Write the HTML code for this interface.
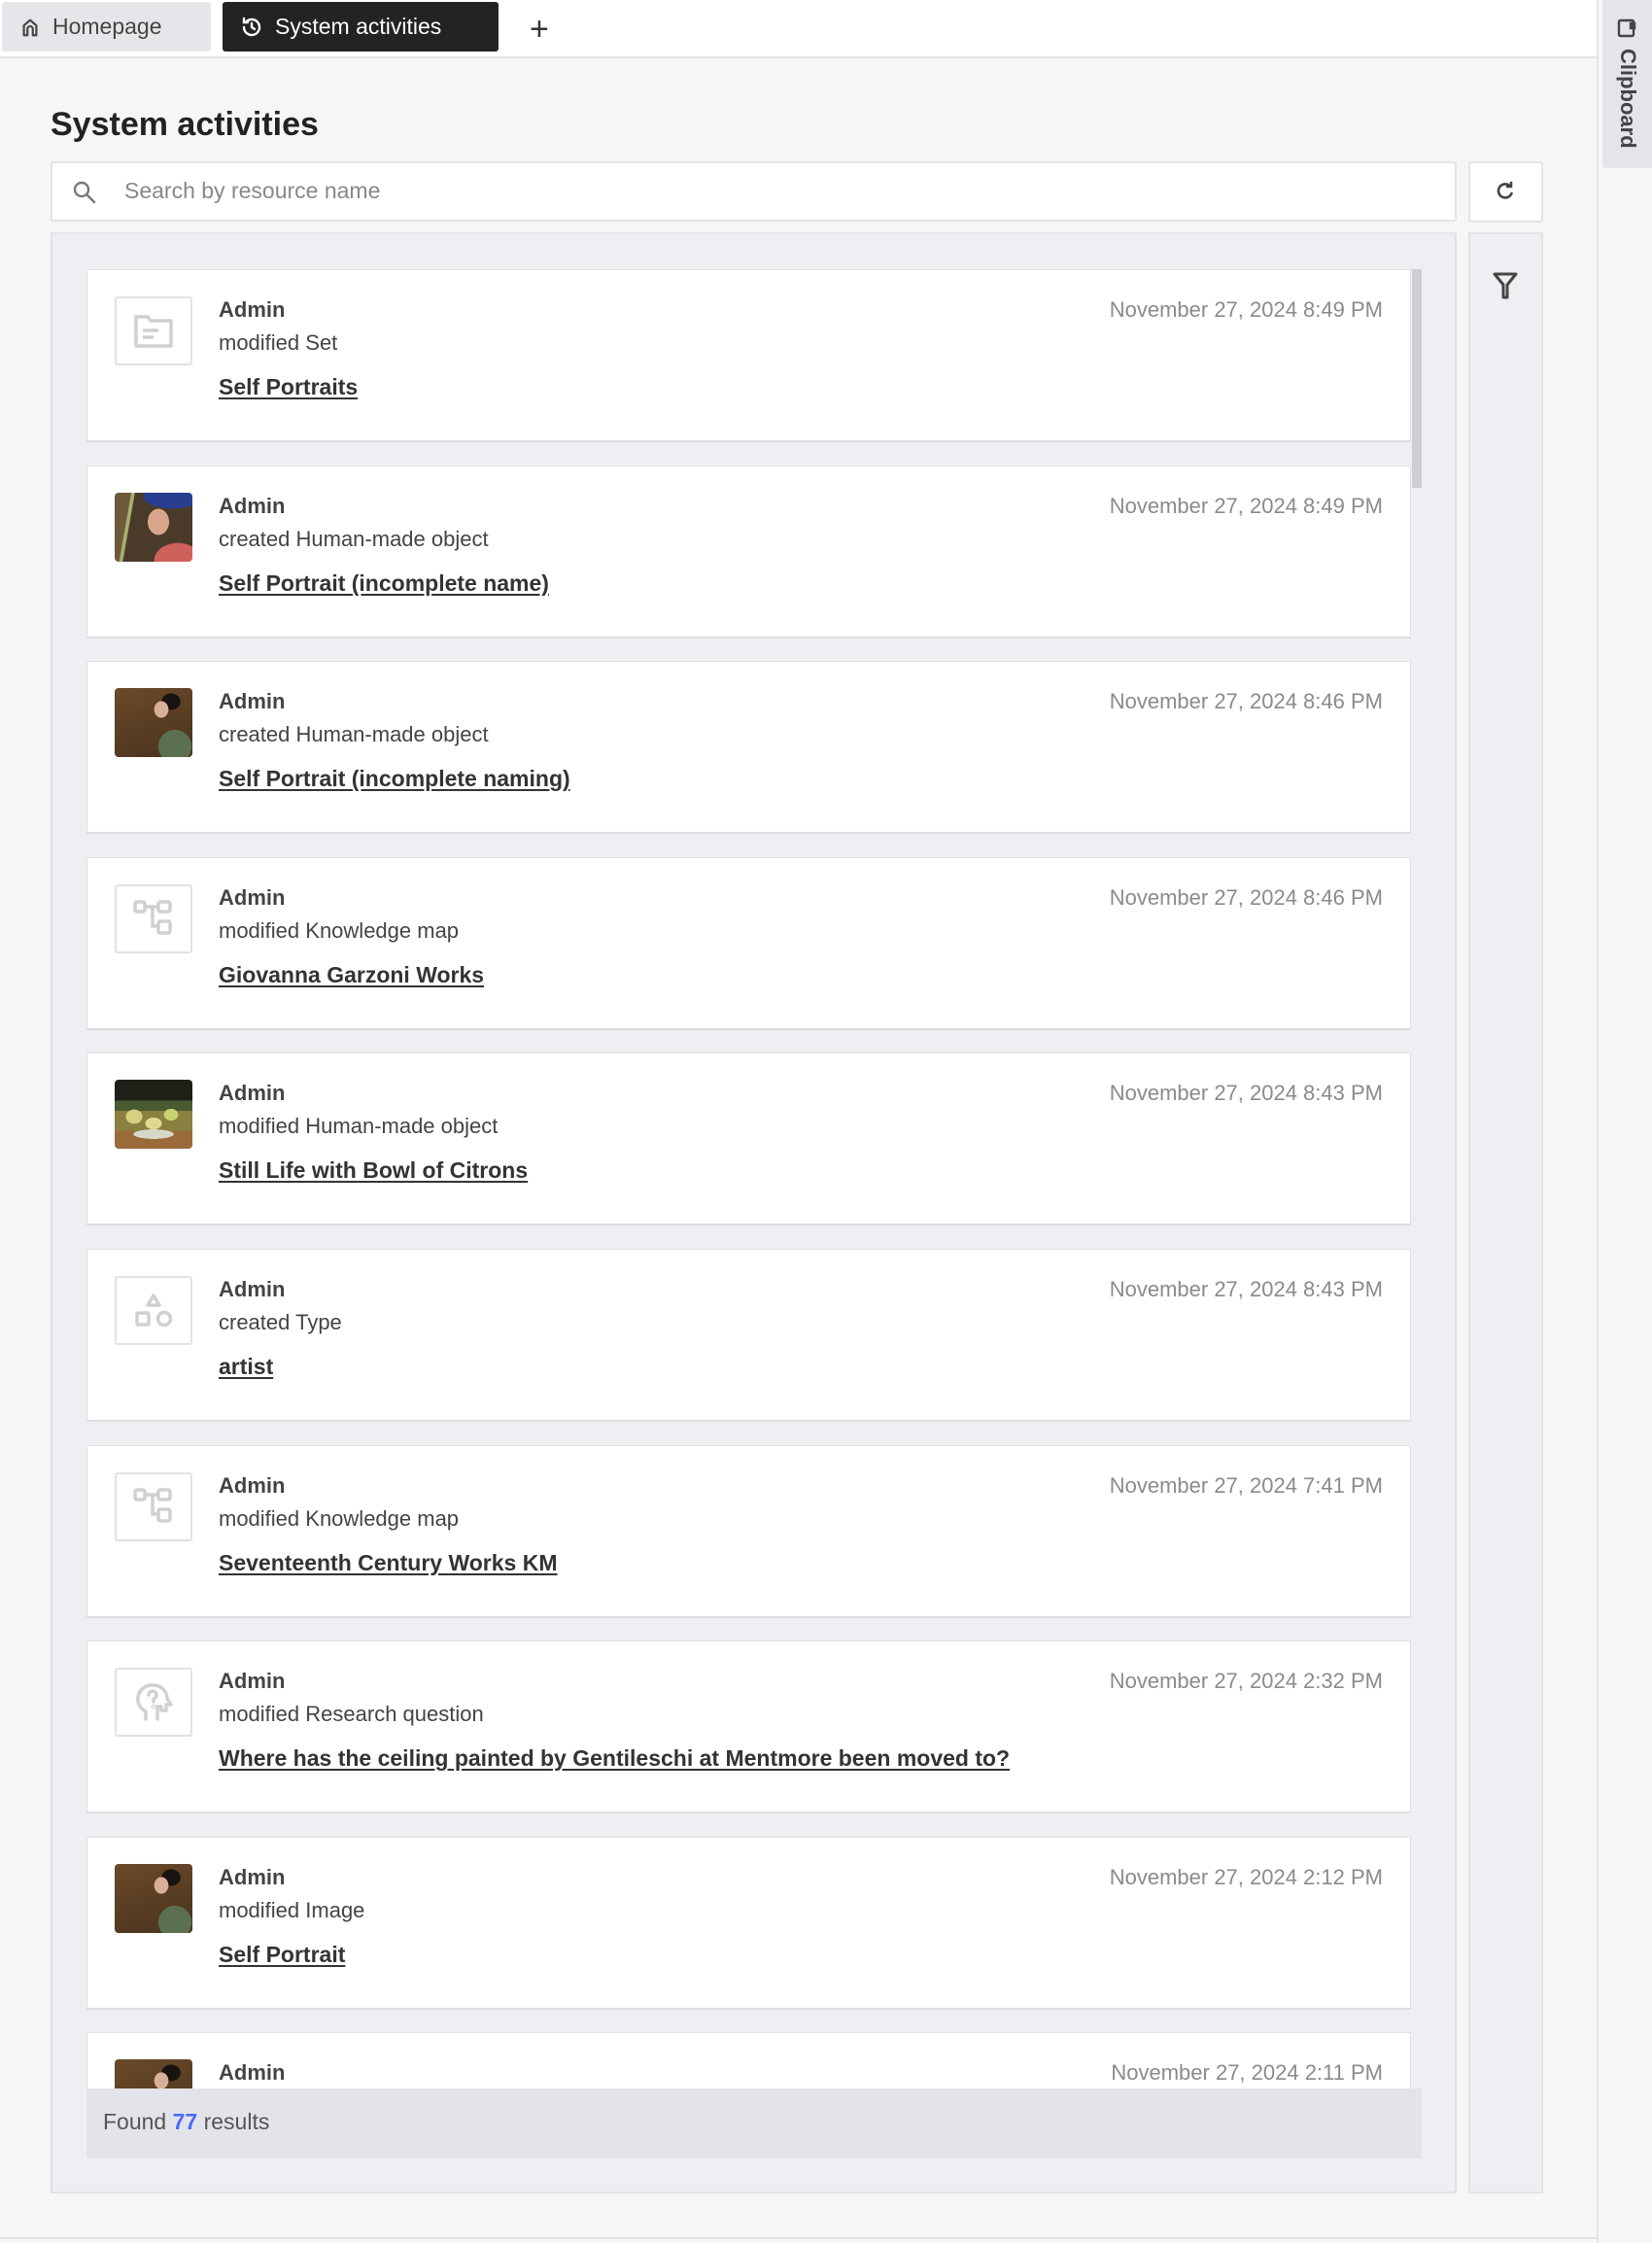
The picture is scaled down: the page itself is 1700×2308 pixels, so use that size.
<!DOCTYPE html>
<html><head><meta charset="utf-8">
<style>
*{box-sizing:border-box;margin:0;padding:0}
body{width:1700px;height:2308px;background:#f6f6f8;font-family:"Liberation Sans",sans-serif;position:relative;overflow:hidden;color:#333}
.abs{position:absolute}
.tabbar{left:0;top:0;width:1643px;height:60px;background:#fff;border-bottom:2px solid #e4e4e8}
.tab{position:absolute;top:2px;height:51px;border-radius:3px;font-size:23px;display:flex;align-items:center}
.card{position:absolute;left:89px;width:1363px;height:178px;background:#fff;border:1px solid #e0e0e4;border-bottom:2px solid #dcdce2}
.thumb{position:absolute;left:28px;top:27px;width:80px;height:71px;border:2px solid #e2e2e6;border-radius:3px;display:flex;align-items:center;justify-content:center;overflow:hidden}
.pic{border:none;border-radius:4px}
.who{position:absolute;left:135px;top:28px;font-size:22px;font-weight:bold;color:#444}
.act{position:absolute;left:135px;top:62px;font-size:22px;color:#444}
.lnk{position:absolute;left:135px;top:107px;font-size:23px;font-weight:bold;color:#333;text-decoration:underline;text-underline-offset:3px}
.date{position:absolute;right:28px;top:28px;font-size:22px;color:#8a8a90}
</style></head><body>
<div class="abs tabbar"></div>
<div class="tab" style="left:2px;width:215px;background:#e6e6ea;color:#444">
<svg style="margin-left:18px" width="22" height="22" viewBox="0 0 24 24" fill="none" stroke="#444" stroke-width="2.4" stroke-linejoin="round"><path d="M5 21V10l7-6 7 6v11h-4v-7a3 3 0 0 0-6 0v7z"/></svg>
<span style="margin-left:12px">Homepage</span></div>
<div class="tab" style="left:229px;width:284px;background:#232325;color:#fff">
<svg style="margin-left:18px" width="24" height="24" viewBox="0 0 24 24" fill="none" stroke="#fff" stroke-width="2.4" stroke-linecap="round"><path d="M4 12a8 8 0 1 0 2.5-5.8"/><path d="M4 3v4h4"/><path d="M12 8v4l3 2"/></svg>
<span style="margin-left:12px">System activities</span></div>
<div class="abs" style="left:545px;top:15px;font-size:34px;color:#333;line-height:30px">+</div>

<div class="abs" style="left:1643px;top:0;width:2px;height:2308px;background:#e6e6ea"></div>
<div class="abs" style="left:1649px;top:0;width:51px;height:173px;background:#e4e4ea;border-radius:0 0 0 4px"></div>
<svg class="abs" style="left:1663px;top:18px" width="22" height="22" viewBox="0 0 22 22" fill="none" stroke="#444" stroke-width="2.4"><rect x="3" y="3" width="15" height="16" rx="1.5"/><rect x="15" y="6" width="4" height="5" fill="#444"/></svg>
<div class="abs" style="left:1662px;top:50px;writing-mode:vertical-rl;font-size:22px;font-weight:bold;color:#444">Clipboard</div>

<div class="abs" style="left:52px;top:111px;font-size:34px;font-weight:bold;color:#222;line-height:34px">System activities</div>

<div class="abs" style="left:52px;top:166px;width:1447px;height:62px;background:#fff;border:2px solid #e4e4e8;border-radius:3px"></div>
<svg class="abs" style="left:74px;top:185px" width="26" height="26" viewBox="0 0 26 26" fill="none" stroke="#777" stroke-width="2.4" stroke-linecap="round"><circle cx="10" cy="10" r="7"/><path d="M15 15l8 8"/></svg>
<div class="abs" style="left:128px;top:183px;font-size:23px;color:#888">Search by resource name</div>
<div class="abs" style="left:1511px;top:166px;width:77px;height:63px;background:#fff;border:2px solid #e4e4e8;border-radius:3px"></div>
<svg class="abs" style="left:1537px;top:185px" width="24" height="24" viewBox="0 0 24 24" fill="none" stroke="#444" stroke-width="2.6" stroke-linecap="round"><path d="M18.5 14a7 7 0 1 1-1.5-7.5"/><path d="M18 3v4h-4"/></svg>

<div class="abs" style="left:52px;top:239px;width:1447px;height:2018px;background:#efeff3;border:2px solid #e2e2e6;border-top:2px solid #e6e6ea"></div>
<div class="abs" style="left:1511px;top:239px;width:77px;height:2018px;background:#efeff3;border:2px solid #e2e2e6"></div>
<svg class="abs" style="left:1536px;top:280px" width="26" height="28" viewBox="0 0 26 28" fill="#444"><path d="M2 2h22l-9 11v13h-4V13z" fill="none" stroke="#444" stroke-width="3" stroke-linejoin="round"/></svg>

<div class="abs" style="left:52px;top:241px;width:1447px;height:1908px;overflow:hidden">
<div style="position:relative;left:-52px;top:-241px;width:1500px;height:2400px">

<div class="card" style="top:277px"><div class="thumb"><svg width="40" height="34" viewBox="0 0 40 34" fill="none" stroke="#d0d0d4" stroke-width="3.5" stroke-linejoin="round"><path d="M2 2h12l3 4h21v26H2z"/><path d="M9 16h16M9 23h11"/></svg></div>
<div class="who">Admin</div><div class="act">modified Set</div><div class="lnk">Self Portraits</div><div class="date">November 27, 2024 8:49 PM</div></div>

<div class="card" style="top:478.6px"><div class="thumb pic" style="background:radial-gradient(ellipse 18px 22px at 45px 30px,#d9a58a 60%,transparent 62%),radial-gradient(ellipse 50px 20px at 60px 4px,#2a3e90 60%,transparent 62%),radial-gradient(ellipse 40px 30px at 65px 70px,#d0605a 60%,transparent 62%),linear-gradient(100deg,#6e5a3a 0 18%,#a8b070 19% 22%,#4a3a2a 23% 100%)"></div>
<div class="who">Admin</div><div class="act">created Human-made object</div><div class="lnk">Self Portrait (incomplete name)</div><div class="date">November 27, 2024 8:49 PM</div></div>

<div class="card" style="top:680.2px"><div class="thumb pic" style="background:radial-gradient(ellipse 12px 14px at 48px 22px,#d8b098 60%,transparent 62%),radial-gradient(ellipse 16px 14px at 58px 14px,#1a1410 60%,transparent 62%),radial-gradient(ellipse 28px 28px at 62px 60px,#5a7050 60%,transparent 62%),linear-gradient(160deg,#6a4a2a,#4a321c)"></div>
<div class="who">Admin</div><div class="act">created Human-made object</div><div class="lnk">Self Portrait (incomplete naming)</div><div class="date">November 27, 2024 8:46 PM</div></div>

<div class="card" style="top:881.8px"><div class="thumb"><svg width="42" height="38" viewBox="0 0 42 38" fill="none" stroke="#d0d0d4" stroke-width="3.5"><rect x="2" y="2" width="10" height="10" rx="2"/><rect x="26" y="2" width="12" height="10" rx="2"/><rect x="26" y="22" width="12" height="12" rx="2"/><path d="M12 7h14M20 7v20h6"/></svg></div>
<div class="who">Admin</div><div class="act">modified Knowledge map</div><div class="lnk">Giovanna Garzoni Works</div><div class="date">November 27, 2024 8:46 PM</div></div>

<div class="card" style="top:1083.4px"><div class="thumb pic" style="background:radial-gradient(ellipse 14px 10px at 40px 45px,#e0d890 60%,transparent 62%),radial-gradient(ellipse 14px 12px at 20px 38px,#d8d080 60%,transparent 62%),radial-gradient(ellipse 12px 10px at 58px 36px,#c8d070 60%,transparent 62%),radial-gradient(ellipse 34px 8px at 40px 56px,#d8d8c8 60%,transparent 62%),linear-gradient(180deg,#1e2018 0 30%,#4a5a30 30% 45%,#8a8040 45% 75%,#9a6a3a 75%)"></div>
<div class="who">Admin</div><div class="act">modified Human-made object</div><div class="lnk">Still Life with Bowl of Citrons</div><div class="date">November 27, 2024 8:43 PM</div></div>

<div class="card" style="top:1285px"><div class="thumb"><svg width="40" height="38" viewBox="0 0 40 38" fill="none" stroke="#d0d0d4" stroke-width="3.5" stroke-linejoin="round"><path d="M20 3l6 10H14z"/><rect x="3" y="21" width="12" height="12" rx="1"/><circle cx="31" cy="27" r="6.5"/></svg></div>
<div class="who">Admin</div><div class="act">created Type</div><div class="lnk">artist</div><div class="date">November 27, 2024 8:43 PM</div></div>

<div class="card" style="top:1486.6px"><div class="thumb"><svg width="42" height="38" viewBox="0 0 42 38" fill="none" stroke="#d0d0d4" stroke-width="3.5"><rect x="2" y="2" width="10" height="10" rx="2"/><rect x="26" y="2" width="12" height="10" rx="2"/><rect x="26" y="22" width="12" height="12" rx="2"/><path d="M12 7h14M20 7v20h6"/></svg></div>
<div class="who">Admin</div><div class="act">modified Knowledge map</div><div class="lnk">Seventeenth Century Works KM</div><div class="date">November 27, 2024 7:41 PM</div></div>

<div class="card" style="top:1688.2px"><div class="thumb"><svg width="40" height="42" viewBox="0 0 40 42" fill="none" stroke="#d0d0d4" stroke-width="3.5" stroke-linecap="round" stroke-linejoin="round"><path d="M12 38v-8C6 27 3 21 4 15 6 6 14 2 21 3c8 1 13 7 13 14l4 6h-5v6h-5v-4h-4v13"/><path d="M15 13a4 4 0 1 1 5 4v3"/><circle cx="20" cy="25" r="0.5"/></svg></div>
<div class="who">Admin</div><div class="act">modified Research question</div><div class="lnk">Where has the ceiling painted by Gentileschi at Mentmore been moved to?</div><div class="date">November 27, 2024 2:32 PM</div></div>

<div class="card" style="top:1889.8px"><div class="thumb pic" style="background:radial-gradient(ellipse 12px 14px at 48px 22px,#d8b098 60%,transparent 62%),radial-gradient(ellipse 16px 14px at 58px 14px,#1a1410 60%,transparent 62%),radial-gradient(ellipse 28px 28px at 62px 60px,#5a7050 60%,transparent 62%),linear-gradient(160deg,#6a4a2a,#4a321c)"></div>
<div class="who">Admin</div><div class="act">modified Image</div><div class="lnk">Self Portrait</div><div class="date">November 27, 2024 2:12 PM</div></div>

<div class="card" style="top:2091.4px"><div class="thumb pic" style="background:radial-gradient(ellipse 12px 14px at 48px 22px,#d8b098 60%,transparent 62%),radial-gradient(ellipse 16px 14px at 58px 14px,#1a1410 60%,transparent 62%),linear-gradient(160deg,#6a4a2a,#4a321c)"></div>
<div class="who">Admin</div><div class="act">modified Image</div><div class="lnk">Self Portrait</div><div class="date">November 27, 2024 2:11 PM</div></div>
</div></div>

<div class="abs" style="left:1453px;top:277px;width:10px;height:225px;background:#cdcdd3"></div>
<div class="abs" style="left:89px;top:2149px;width:1374px;height:72px;background:#e3e3ea;border-radius:0 0 3px 3px"></div>
<div class="abs" style="left:106px;top:2170px;font-size:23px;color:#555">Found <b style="color:#4a6cf7">77</b> results</div>
<div class="abs" style="left:0;top:2302px;width:1643px;height:2px;background:#e2e2e6"></div>
</body></html>
